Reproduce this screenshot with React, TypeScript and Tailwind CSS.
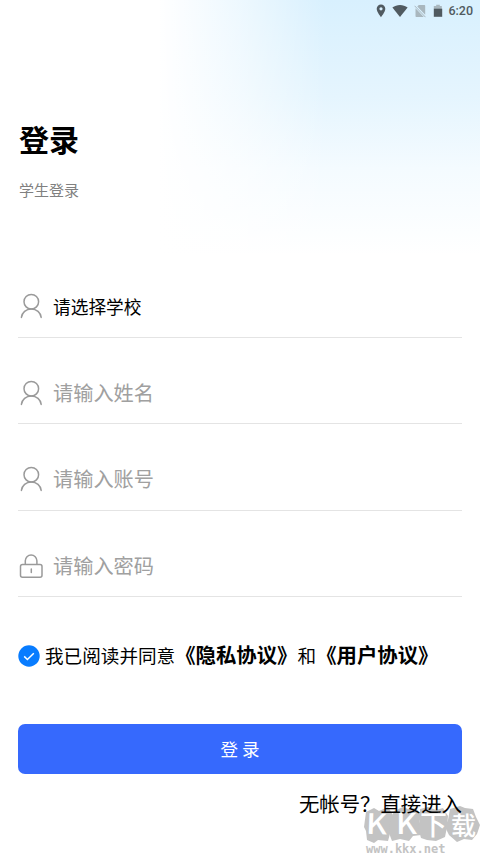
import React, { useState } from 'react';

interface Field {
  name: string;
  placeholder: string;
  icon: 'user' | 'lock';
  type: string;
}

const fields: Field[] = [
  { name: 'name', placeholder: '请输入姓名', icon: 'user', type: 'text' },
  { name: 'account', placeholder: '请输入账号', icon: 'user', type: 'text' },
  { name: 'password', placeholder: '请输入密码', icon: 'lock', type: 'password' },
];

const UserIcon = () => (
  <svg className="h-[26px] w-[26px] shrink-0" viewBox="0 0 26 26" fill="none" stroke="#9a9a9a" strokeWidth="1.5" strokeLinecap="round">
    <circle cx="13.3" cy="8.7" r="7.3" />
    <path d="M3.4 24.4c.6-4.8 4.6-8.4 9.9-8.4s9.300 3.600 9.900 8.400" />
  </svg>
);

const LockIcon = () => (
  <svg className="h-[26px] w-[26px] shrink-0" viewBox="0 0 26 26" fill="none" stroke="#9a9a9a" strokeWidth="1.5" strokeLinecap="round">
    <rect x="2.500" y="11.500" width="21.500" height="12.800" rx="2" />
    <path d="M7.300 11.300V7.800a5.800 5.800 0 0 1 11.600 0v3.500M13.300 16v3.600" />
  </svg>
);

const StatusBar = () => (
  <div className="flex h-[22px] items-center justify-end pr-[7px] text-[#505a60]">
    <svg className="h-[14px] w-[10px]" viewBox="0 0 10 14" fill="currentColor">
      <path fillRule="evenodd" d="M5 .5A4.300 4.300 0 0 0 .7 4.800C.7 8 5 13.200 5 13.200S9.300 8 9.300 4.800A4.300 4.300 0 0 0 5 .5Zm0 2.700a1.600 1.600 0 1 1 0 3.200 1.600 1.600 0 0 1 0-3.200Z" />
    </svg>
    <svg className="ml-[6px] h-[14px] w-[16px]" viewBox="0 0 16 14" fill="currentColor">
      <path d="M.4 3.600C2.600 1.900 5.200 1 8 1s5.400.9 7.600 2.600L8 13Z" />
    </svg>
    <svg className="ml-[6px] h-[14px] w-[12px]" viewBox="0 0 12 14" fill="#a9b7be">
      <path d="M4.800 1h5.600c.5 0 .8.300.8.800v9L3.300 2.600ZM1.500 4.200l8.300 8.800H2.300c-.5 0-.8-.3-.8-.8Z" />
      <path d="m.6 1.800 10.900 11.400" stroke="#a9b7be" strokeWidth="1" />
    </svg>
    <svg className="ml-[7px] h-[14px] w-[10px]" viewBox="0 0 10 14" fill="currentColor">
      <path d="M3.200.8h3.600v1.300h2V5H.8V2.100h2.400Z" fill="#a9b7be" />
      <path d="M.8 4.700h8.400v8.100H.8Z" />
    </svg>
    <span className="ml-[5px] font-['Roboto'] text-[12.5px] leading-none font-medium">6:20</span>
  </div>
);

const Watermark = () => (
  <div className="absolute top-[804px] left-[362px] h-[51px] w-[118px]">
    <svg className="absolute inset-0 h-full w-full" viewBox="0 0 118 51">
      <g fill="#c3c3c3">
        <path d="m4 8 8-4 5 3 9-4 5 8-2 15-3 11-10-1-4 3-7-3-1-9-2-4Z" />
        <path d="m32 7 9-4 5 2 8-1 5 7-2 9 2 11-8 1-4 5-9-2-8 2-3-8 1-11Z" />
        <path d="m58 5 8-2 8 3 7-2 5 8-1 11-2 10-9 4-9-1-6-2-3-11 2-8Z" />
        <path d="m88 5 10-3 5 2 8 1 3 8 4 8-3 9-5 6-8-1-7 3-8-7-4-8 3-7Z" />
      </g>
      <g fill="#fff" fontFamily="'Noto Sans CJK SC', sans-serif" fontWeight="500">
        <text x="4" y="30" fontSize="28" textLength="21" lengthAdjust="spacingAndGlyphs" transform="rotate(2 14 20)">K</text>
        <text x="34" y="30" fontSize="28" textLength="21" lengthAdjust="spacingAndGlyphs">K</text>
        <text x="58" y="31" fontSize="27">下</text>
        <text x="89" y="31" fontSize="25">载</text>
      </g>
    </svg>
    <span className="absolute top-[38px] left-[4px] font-['DejaVu_Sans_Mono'] text-[12px] leading-[14px] font-bold text-[#c3c3c3]">www.kkx.net</span>
  </div>
);

const App: React.FC = () => {
  const [agreed, setAgreed] = useState(true);

  return (
    <div lang="zh-CN" className="relative h-[855px] w-[480px] overflow-hidden bg-white font-['Noto_Sans_CJK_SC',sans-serif] text-black">
      {/* Background glow */}
      <div className="absolute inset-x-0 top-0 h-[255px] bg-[linear-gradient(to_right,#fff_33%,rgba(255,255,255,0.55)_50%,transparent_68%),linear-gradient(to_bottom,#d8f0fe,#e5f5fe_38%,#f4fbff_66%,#fff)]" />
      <Watermark />

      <div className="relative">
        <StatusBar />

        <header className="px-[19px] pt-[94px]">
          <h1 className="text-[30px] leading-[44px] font-bold">登录</h1>
          <p className="mt-[19px] text-[15px] leading-[22px] text-[#808080]">学生登录</p>
        </header>

        <form className="mt-[50px] px-[18px]" onSubmit={(e) => e.preventDefault()}>
          <div className="flex h-[86.5px] items-end border-b border-[#e4e4e4]">
            <button type="button" className="flex h-[61px] w-full items-center">
              <UserIcon />
              <span className="ml-[9px] text-[17.7px]">请选择学校</span>
            </button>
          </div>
          {fields.map((field) => (
            <div key={field.name} className="flex h-[86.5px] items-end border-b border-[#e4e4e4]">
              <label className="flex h-[61px] w-full items-center">
                {field.icon === 'user' ? <UserIcon /> : <LockIcon />}
                <input
                  type={field.type}
                  name={field.name}
                  placeholder={field.placeholder}
                  className="ml-[9px] min-w-0 flex-1 text-[20.2px] leading-[30px] outline-none placeholder:text-[#a0a0a0]"
                />
              </label>
            </div>
          ))}

          {/* Agreement */}
          <div className="mt-[41px] flex h-[32px] items-center whitespace-nowrap">
            <button type="button" onClick={() => setAgreed(!agreed)} className="mt-[3px] shrink-0">
              <svg className="h-[22px] w-[22px]" viewBox="0 0 22 22" fill="none">
                <circle cx="11" cy="11" r="10.700" fill={agreed ? '#087cff' : '#d0d0d0'} />
                <path d="m6.200 11.400 3.200 3.100 6.400-6.300" stroke="#fff" strokeWidth="1.500" />
              </svg>
            </button>
            <p className="ml-[5px] text-[18.6px] leading-[32px]">
              我已阅读并同意<b className="text-[20.4px]">《隐私协议》</b>和<b className="text-[20.4px]">《用户协议》</b>
            </p>
          </div>

          <button type="submit" className="mt-[54px] h-[50px] w-full rounded-[7px] bg-[#3669fd] text-[17.5px] text-white">
            登 录
          </button>
        </form>

        <div className="mt-[14px] pr-[18px] text-right text-[20.4px] leading-[30px]">无帐号？直接进入</div>
      </div>
    </div>
  );
};

export default App;
